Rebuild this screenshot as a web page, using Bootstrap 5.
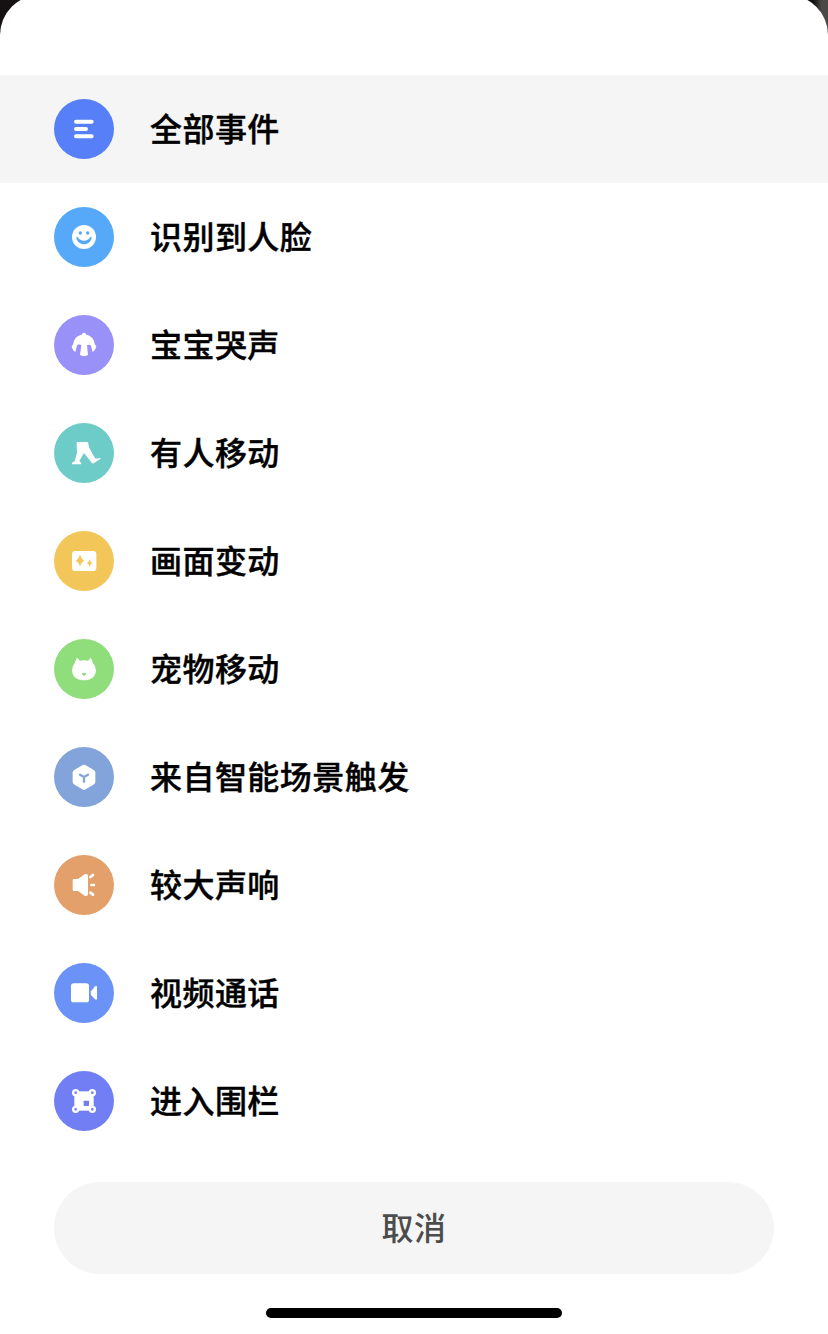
<!DOCTYPE html>
<html lang="zh-CN">
<head>
<meta charset="utf-8">
<meta name="viewport" content="width=device-width, initial-scale=1">
<title>事件筛选</title>
<link rel="stylesheet" href="https://cdn.jsdelivr.net/npm/bootstrap@5.3.0/dist/css/bootstrap.min.css">
<style>
  body { background: linear-gradient(90deg, #151011 0 50%, #141312 98.3%, #4a4945 99.2%); font-family: "Noto Sans CJK SC", sans-serif; height: 1334px; overflow: hidden; }
  .sheet { height: 1339px; margin-top: -5px; padding-top: 80px; border-radius: 40px 40px 0 0; background: #fff; }
  .event-row.list-group-item { height: 108px; padding: 0 54px; gap: 36px; color: #000; font-size: 32px; font-weight: 500; line-height: 48px; letter-spacing: .45px; background: #fff; border: 0; }
  .event-row span { padding-bottom: 4px; -webkit-text-stroke: .4px #000; }
  .event-row.current { background: #f5f5f5; }
  .event-icon { width: 60px; height: 60px; fill: #fff; stroke: none; }
  .cancel.btn { height: 92px; margin: 27px 54px 0; background: #f5f5f5; color: #4c4c4c; font-size: 32px; font-weight: 500; line-height: 48px; letter-spacing: .4px; border: 0; padding: 0 0 4px; }
  .home-bar { width: 296px; height: 10px; margin-top: 34px; background: #000; }
</style>
</head>
<body>
<main class="sheet d-flex flex-column">
  <div class="list-group list-group-flush">
    <a class="event-row current list-group-item d-flex align-items-center">
      <svg class="event-icon rounded-circle flex-shrink-0" style="background:#567ff8" viewBox="30 30 180 180"><path d="M96 98H143M96 120H126M96 142H143" stroke="#fff" stroke-width="12" stroke-linecap="round"/></svg>
      <span>全部事件</span>
    </a>
    <a class="event-row list-group-item d-flex align-items-center">
      <svg class="event-icon rounded-circle flex-shrink-0" style="background:#56a9f9" viewBox="30 30 180 180"><circle cx="120" cy="120" r="36"/><g fill="#56a9f9"><circle cx="109" cy="108" r="5"/><circle cx="131" cy="108" r="5"/><path d="M97 120Q99 118 102 121C107 135 133 135 138 121Q141 118 143 120C141 149 99 149 97 120Z"/></g></svg>
      <span>识别到人脸</span>
    </a>
    <a class="event-row list-group-item d-flex align-items-center">
      <svg class="event-icon rounded-circle flex-shrink-0" style="background:#9990f8" viewBox="30 30 180 180"><path d="M113 89Q115 83 120 83Q125 83 127 89C142 92 151 103 152 117L157 124C156 131 151 138 146 141L141 122L137 119L129 120L132 150Q120 157 108 150L112 120L103 118L99 122L94 141C88 138 84 131 83 124L88 117C89 102 98 92 113 89Z"/></svg>
      <span>宝宝哭声</span>
    </a>
    <a class="event-row list-group-item d-flex align-items-center">
      <svg class="event-icon rounded-circle flex-shrink-0" style="background:#6dccc8" viewBox="30 30 180 180"><path d="M98 87H132L135 103L153 136Q160 138 168 134Q171 136 169 138L149 151Q146 152 143 149L120 120L106 144L111 149Q114 151 111 154H84Q83 150 86 148L92 145L99 119Q98 103 98 87Z"/></svg>
      <span>有人移动</span>
    </a>
    <a class="event-row list-group-item d-flex align-items-center">
      <svg class="event-icon rounded-circle flex-shrink-0" style="background:#f3c659" viewBox="30 30 180 180"><rect x="84" y="90" width="73" height="60" rx="10"/><path fill="#f3c659" d="M108 99Q111 114 121 119Q111 123 108 137Q105 123 95 119Q105 114 108 99ZM137 115Q139 124 145 126Q139 129 137 137Q135 129 129 126Q135 124 137 115Z"/></svg>
      <span>画面变动</span>
    </a>
    <a class="event-row list-group-item d-flex align-items-center">
      <svg class="event-icon rounded-circle flex-shrink-0" style="background:#8fdd7b" viewBox="30 30 180 180"><path d="M98 87Q101 86 107 95Q120 92 133 95Q138 86 141 87Q144 93 147 103Q156 112 156 123C156 143 140 154 120 154S84 143 84 123Q84 112 92 103Q95 93 98 87Z"/><path fill="#8fdd7b" d="M113 133Q120 130 127 133Q127 137 120 141Q113 137 113 133Z"/></svg>
      <span>宠物移动</span>
    </a>
    <a class="event-row list-group-item d-flex align-items-center">
      <svg class="event-icon rounded-circle flex-shrink-0" style="background:#83a4da" viewBox="30 30 180 180"><path d="M115 85Q120 82 125 85L148 98Q154 101 154 106V135Q154 140 148 143L125 157Q120 160 115 157L92 143Q86 140 86 135V106Q86 101 92 98Z"/><path d="M108 113L120 120L132 113M120 120V134" fill="none" stroke="#83a4da" stroke-width="7" stroke-linecap="round"/></svg>
      <span>来自智能场景触发</span>
    </a>
    <a class="event-row list-group-item d-flex align-items-center">
      <svg class="event-icon rounded-circle flex-shrink-0" style="background:#e3a06a" viewBox="30 30 180 180"><path d="M86 105Q86 102 90 102H102L122 88Q132 85 132 94V146Q132 155 122 152L102 138H90Q86 138 86 135Z"/><path d="M139 96L147 90M142 120H150M139 143L147 149" stroke="#fff" stroke-width="8" stroke-linecap="round"/></svg>
      <span>较大声响</span>
    </a>
    <a class="event-row list-group-item d-flex align-items-center">
      <svg class="event-icon rounded-circle flex-shrink-0" style="background:#6b92f6" viewBox="30 30 180 180"><rect x="81" y="91" width="54" height="57" rx="8"/><path d="M141 115L153 100Q159 97 159 102V137Q159 142 153 139L141 126Q139 120 141 115Z"/></svg>
      <span>视频通话</span>
    </a>
    <a class="event-row list-group-item d-flex align-items-center">
      <svg class="event-icon rounded-circle flex-shrink-0" style="background:#727ff4" viewBox="30 30 180 180"><rect x="91" y="91" width="58" height="58"/><g stroke="#fff" stroke-width="7" fill="#727ff4"><circle cx="95" cy="95" r="7.5"/><circle cx="145" cy="95" r="7.5"/><circle cx="95" cy="145" r="7.5"/><circle cx="145" cy="145" r="7.5"/></g><rect x="119" y="119" width="16" height="16" rx="2" fill="#727ff4"/></svg>
      <span>进入围栏</span>
    </a>
  </div>
  <button class="cancel btn rounded-pill" type="button">取消</button>
  <div class="home-bar rounded-pill align-self-center"></div>
</main>
<script src="https://cdn.jsdelivr.net/npm/bootstrap@5.3.0/dist/js/bootstrap.bundle.min.js"></script>
</body>
</html>
